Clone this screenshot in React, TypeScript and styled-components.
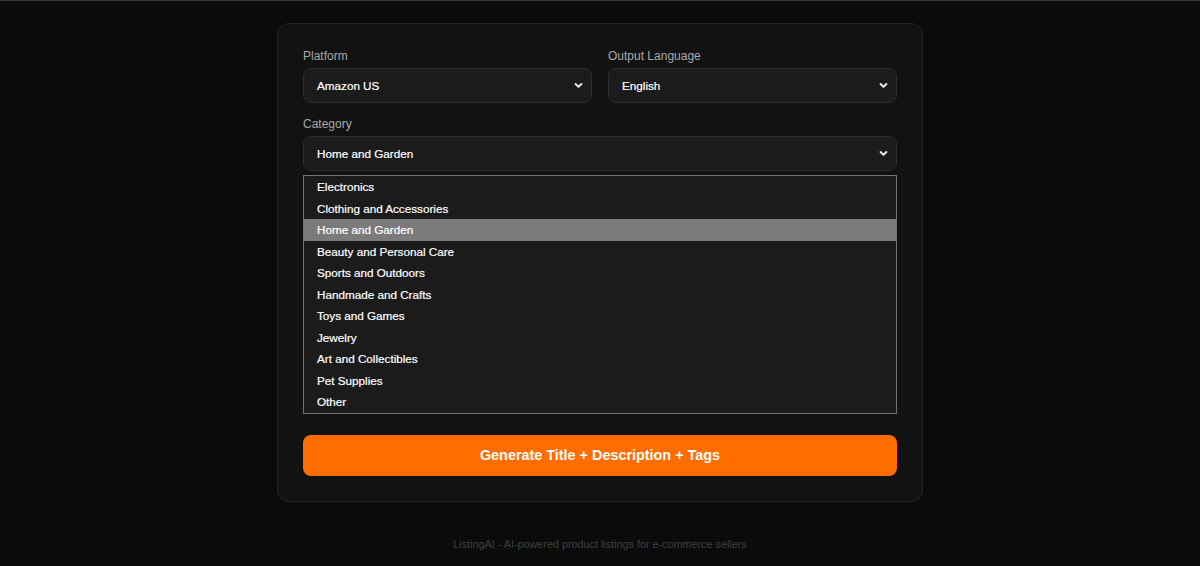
import React, { useState } from 'react'
import styled, { createGlobalStyle } from 'styled-components'

const GlobalStyle = createGlobalStyle`
  html, body {
    margin: 0;
    padding: 0;
    background: #0b0b0b;
    font-family: "Liberation Sans", Arial, sans-serif;
  }
  body {
    border-top: 1px solid #3a3a3a;
    min-height: 565px;
  }
`

const Page = styled.div`
  display: flex;
  flex-direction: column;
  align-items: center;
  padding-top: 22px;
`

const Card = styled.div`
  width: 594px;
  padding: 24px 25px 25px;
  background: #121212;
  border: 1px solid #232323;
  border-radius: 12px;
`

const Row = styled.div`
  display: grid;
  grid-template-columns: 1fr 1fr;
  gap: 16px;
  margin-bottom: 13px;
`

const Field = styled.div`
  display: flex;
  flex-direction: column;
`

const Label = styled.label`
  font-size: 12px;
  line-height: 16px;
  color: #a8a8a8;
  margin-bottom: 4px;
`

const SelectBox = styled.div`
  height: 35px;
  box-sizing: border-box;
  display: flex;
  align-items: center;
  justify-content: space-between;
  padding: 0 8px 0 13px;
  background: #1b1b1b;
  border: 1px solid #2e2e2e;
  border-radius: 8px;
  color: #fff;
  font-size: 11.7px;
  -webkit-text-stroke: 0.2px #fff;
  cursor: pointer;
`

const Chevron = () => (
  <svg width="9" height="9" viewBox="0 0 9 9">
    <path d="M1.6 3 L4.5 5.9 L7.4 3" fill="none" stroke="#e8e8e8" strokeWidth="2" strokeLinecap="round" strokeLinejoin="round" />
  </svg>
)

const ListBox = styled.ul`
  list-style: none;
  margin: 4px 0 0;
  padding: 0;
  border: 1px solid #727272;
  background: #1b1b1b;
`

const Option = styled.li<{ $active: boolean }>`
  height: 21.5px;
  line-height: 21.5px;
  padding: 0 13px;
  font-size: 11.7px;
  -webkit-text-stroke: 0.2px #fff;
  color: #fff;
  background: ${p => (p.$active ? '#7b7b7b' : 'transparent')};
`

const GenerateButton = styled.button`
  display: block;
  width: 100%;
  height: 41px;
  margin-top: 21px;
  border: none;
  border-radius: 8px;
  background: #ff6d00;
  color: #fff;
  font-family: "Liberation Sans", Arial, sans-serif;
  font-size: 14.4px;
  font-weight: 700;
  cursor: pointer;
`

const Footer = styled.footer`
  margin-top: 36px;
  font-size: 10.8px;
  color: #404040;
`

const categories = [
  'Electronics',
  'Clothing and Accessories',
  'Home and Garden',
  'Beauty and Personal Care',
  'Sports and Outdoors',
  'Handmade and Crafts',
  'Toys and Games',
  'Jewelry',
  'Art and Collectibles',
  'Pet Supplies',
  'Other',
]

export default function App() {
  const [category, setCategory] = useState('Home and Garden')

  return (
    <>
      <GlobalStyle />
      <Page>
        <Card>
          <Row>
            <Field>
              <Label>Platform</Label>
              <SelectBox>
                <span>Amazon US</span>
                <Chevron />
              </SelectBox>
            </Field>
            <Field>
              <Label>Output Language</Label>
              <SelectBox>
                <span>English</span>
                <Chevron />
              </SelectBox>
            </Field>
          </Row>
          <Field>
            <Label>Category</Label>
            <SelectBox>
              <span>{category}</span>
              <Chevron />
            </SelectBox>
            <ListBox>
              {categories.map(c => (
                <Option key={c} $active={c === category} onClick={() => setCategory(c)}>
                  {c}
                </Option>
              ))}
            </ListBox>
          </Field>
          <GenerateButton>Generate Title + Description + Tags</GenerateButton>
        </Card>
        <Footer>ListingAI - AI-powered product listings for e-commerce sellers</Footer>
      </Page>
    </>
  )
}
